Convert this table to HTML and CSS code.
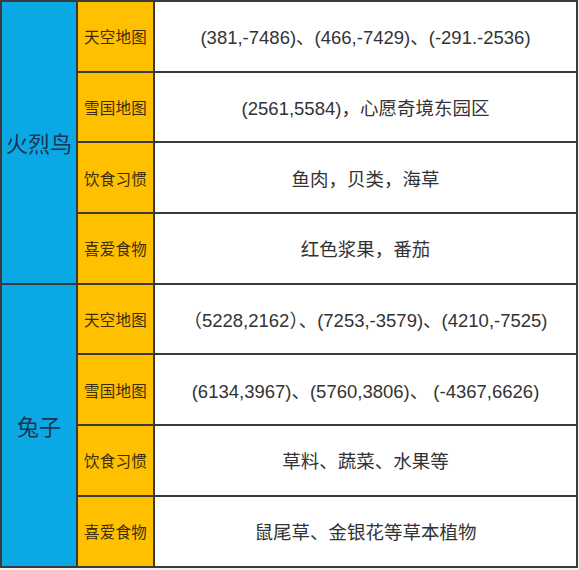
FILE: index.html
```html
<!DOCTYPE html>
<html lang="zh-CN">
<head>
<meta charset="utf-8">
<title>动物信息</title>
<link rel="stylesheet" href="styles.css">
</head>
<body>
<table class="info">
  <colgroup>
    <col class="c-name">
    <col class="c-label">
    <col class="c-value">
  </colgroup>
  <tbody>
    <tr>
      <td class="name" rowspan="4">火烈鸟</td>
      <td class="label">天空地图</td>
      <td class="value">(381,-7486)、(466,-7429)、(-291.-2536)</td>
    </tr>
    <tr>
      <td class="label">雪国地图</td>
      <td class="value">(2561,5584)，心愿奇境东园区</td>
    </tr>
    <tr>
      <td class="label">饮食习惯</td>
      <td class="value">鱼肉，贝类，海草</td>
    </tr>
    <tr>
      <td class="label">喜爱食物</td>
      <td class="value">红色浆果，番茄</td>
    </tr>
    <tr>
      <td class="name" rowspan="4">兔子</td>
      <td class="label">天空地图</td>
      <td class="value">（5228,2162）、(7253,-3579)、(4210,-7525)</td>
    </tr>
    <tr>
      <td class="label">雪国地图</td>
      <td class="value">(6134,3967)、(5760,3806)、 (-4367,6626)</td>
    </tr>
    <tr>
      <td class="label">饮食习惯</td>
      <td class="value">草料、蔬菜、水果等</td>
    </tr>
    <tr>
      <td class="label">喜爱食物</td>
      <td class="value">鼠尾草、金银花等草本植物</td>
    </tr>
  </tbody>
</table>
</body>
</html>
```

FILE: styles.css
```css
html, body {
  margin: 0;
  padding: 0;
  background: #f0f0f0;
}

body {
  font-family: "Liberation Sans", "Noto Sans CJK SC", sans-serif;
}

.info {
  border-collapse: collapse;
  table-layout: fixed;
  width: 578px;
  border: 2px solid #3a3a3a;
}

.c-name { width: 76px; }
.c-label { width: 77px; }

.info tr {
  height: 70.7px;
}

.info td {
  border: 2px solid #3a3a3a;
  padding: 0;
  text-align: center;
  vertical-align: middle;
}

.name {
  background: #0aa9e6;
  color: #1b3552;
  font-size: 22px;
  font-family: "Noto Sans CJK SC", sans-serif;
}

.label {
  background: #ffc000;
  color: #3d2d08;
  font-size: 15.5px;
  letter-spacing: 0.3px;
  font-family: "Noto Sans CJK SC", sans-serif;
}

.value {
  background: #ffffff;
  color: #333333;
  font-size: 18.5px;
  white-space: nowrap;
}
```
